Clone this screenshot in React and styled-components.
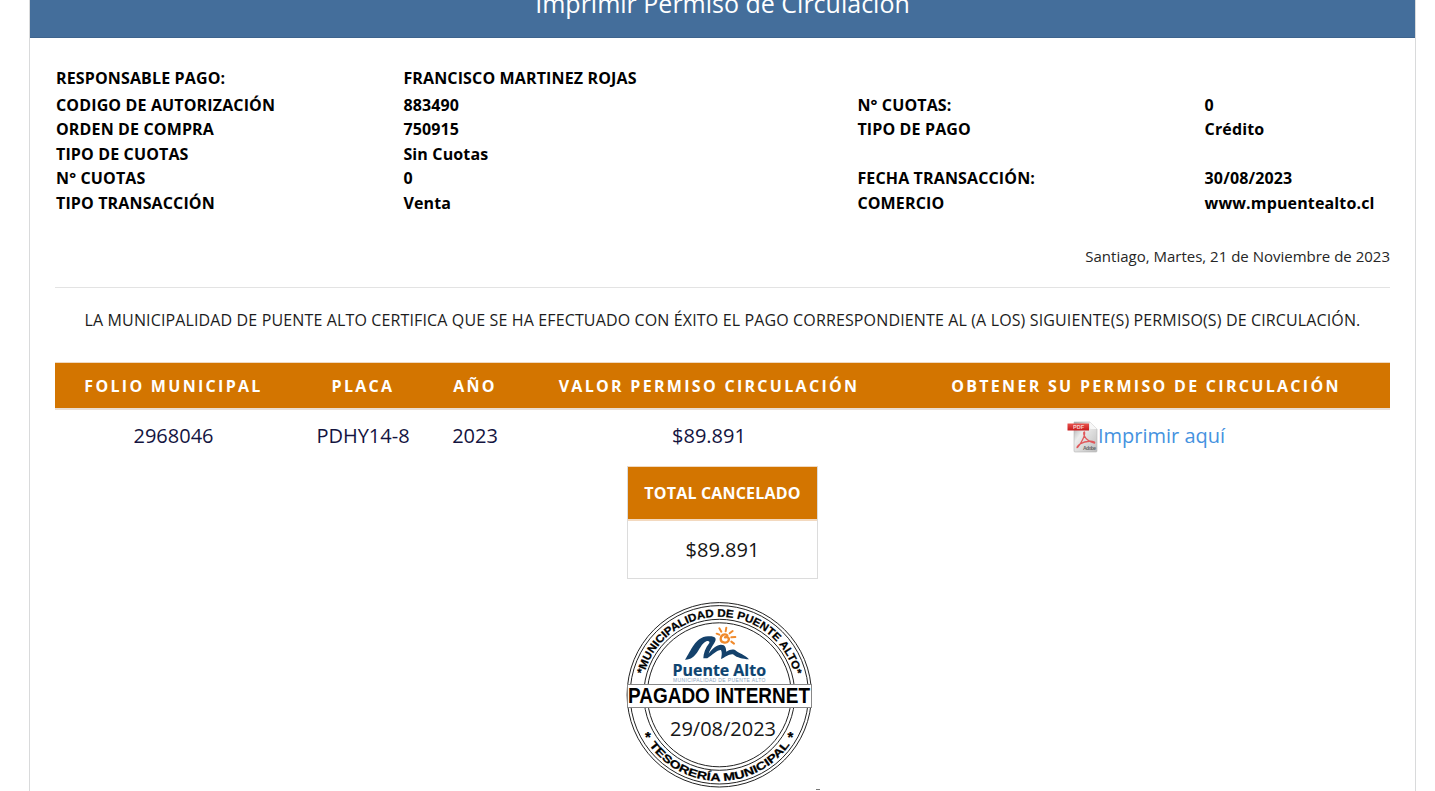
import React from "react";
import styled, { createGlobalStyle } from "styled-components";

const Global = createGlobalStyle`
  html, body { margin: 0; height: 100%; overflow: hidden; background: #fff; }
  body { font-family: "Open Sans", sans-serif; color: #000; }
  * { box-sizing: border-box; }
`;

const Page = styled.div`
  height: 791px;
  overflow: hidden;
  padding: 0 19px 0 29px;
`;

const Panel = styled.main`
  height: 100%;
  border: solid #d9dadb;
  border-width: 0 1px;
`;

const PanelHeader = styled.header`
  height: 38px;
  background: #446e9b;
  border-bottom: 1px solid #3e648d;
  color: #fff;
  display: flex;
  justify-content: center;
  overflow: hidden;
`;

const Title = styled.h1`
  margin: -14px 0 0;
  font-size: 25px;
  line-height: 34px;
  font-weight: 400;
  white-space: nowrap;
`;

const Body = styled.div`
  padding: 25px 25px 0;
`;

const Details = styled.dl`
  margin: 0;
  display: grid;
  grid-template-columns: 347.400px 454px 347.200px 1fr;
  grid-template-rows: 26.700px repeat(5, 24.500px);
  padding: 0 1px;
  width: 1335px;
  font-size: 16px;
  font-weight: 700;
  letter-spacing: 0.140px;
  white-space: nowrap;
`;

const Label = styled.dt`
  padding-top: 3px;
  line-height: 24px;
`;

const Value = styled.dd`
  margin: 0;
  padding-top: 3px;
  line-height: 24px;
`;

const Place = styled.p`
  margin: 32px 0 0;
  height: 44px;
  font-size: 15px;
  line-height: 24px;
  text-align: right;
  color: #262626;
  border-bottom: 1px solid #e3e3e3;
`;

const Statement = styled.p`
  margin: 20px 0 30px;
  height: 24px;
  line-height: 24px;
  font-size: 16px;
  color: #1c1c1c;
  letter-spacing: 0.136px;
  text-align: center;
  white-space: nowrap;
`;

const Table = styled.table`
  width: 1335px;
  table-layout: fixed;
  border-collapse: separate;
  border-spacing: 0;
  text-align: center;
`;

const Head = styled.th`
  height: 48px;
  padding: 1px 0 0;
  background: #d37500;
  color: #fff;
  border-top: 1px solid #f0d9c0;
  border-bottom: 2px solid #eaded2;
  font-size: 16px;
  font-weight: 700;
  letter-spacing: 2.300px;
  white-space: nowrap;
`;

const Cell = styled.td`
  height: 56px;
  padding: 0 0 4px;
  color: #14143f;
  font-size: 20px;
  line-height: 28px;
  vertical-align: middle;
  white-space: nowrap;
`;

const PrintLink = styled.a`
  display: flex;
  align-items: center;
  justify-content: center;
  height: 28px;
  color: #4592e0;
  svg { display: block; margin-top: 2px; }
`;

const Total = styled.section`
  width: 191px;
  height: 113px;
  margin: 0 0 0 572px;
  border: 1px solid #dcdcdc;
  border-top-color: #f0d9c0;
  text-align: center;
`;

const TotalHead = styled.div`
  height: 54px;
  background: #d37500;
  border-bottom: 2px solid #f3d9bf;
  color: #fff;
  font-size: 16px;
  font-weight: 700;
  line-height: 52px;
  letter-spacing: 0.180px;
`;

const TotalValue = styled.div`
  font-size: 20px;
  line-height: 58px;
  color: #161616;
`;

const Stamp = styled.svg`
  display: block;
  margin: 21px 0 0 570px;
`;

const details = [
  ["RESPONSABLE PAGO:", "FRANCISCO MARTINEZ ROJAS", "", ""],
  ["CODIGO DE AUTORIZACIÓN", "883490", "N° CUOTAS:", "0"],
  ["ORDEN DE COMPRA", "750915", "TIPO DE PAGO", "Crédito"],
  ["TIPO DE CUOTAS", "Sin Cuotas", "", ""],
  ["N° CUOTAS", "0", "FECHA TRANSACCIÓN:", "30/08/2023"],
  ["TIPO TRANSACCIÓN", "Venta", "COMERCIO", "www.mpuentealto.cl"],
];

const columns = [
  ["FOLIO MUNICIPAL", 237],
  ["PLACA", 142],
  ["AÑO", 82],
  ["VALOR PERMISO CIRCULACIÓN", 386],
  ["OBTENER SU PERMISO DE CIRCULACIÓN", 488],
];

function PdfIcon() {
  return (
    <svg width="31" height="32" viewBox="0 0 31 32">
      <defs>
        <linearGradient id="sheet" x1="0" y1="0" x2="1" y2="1">
          <stop offset="0" stopColor="#a0a0a0" />
          <stop offset=".35" stopColor="#ececec" />
          <stop offset="1" stopColor="#bdbdbd" />
        </linearGradient>
        <linearGradient id="ribbon" x1="0" y1="0" x2="0" y2="1">
          <stop offset="0" stopColor="#e8544f" />
          <stop offset="1" stopColor="#c81a1c" />
        </linearGradient>
      </defs>
      <path d="M7 1H23L30 8V30Q30 31 29 31H8Q7 31 7 30Z" fill="url(#sheet)" stroke="#b5b5b5" strokeWidth=".6" />
      <path d="M23 1L30 8H24Q23 8 23 7Z" fill="#f7f7f7" />
      <path d="M10.500 26.500C14 23 18.500 14 17.500 11C16 10 15.500 19 27.500 22C29 20.500 20 18.500 13 23C10 25 9.500 27 10.500 26.500Z" fill="none" stroke="#e0585b" strokeWidth="1.300" />
      <path d="M.5 2.500H22V9.500H.5Z" fill="url(#ribbon)" />
      <text x="6" y="8" fontSize="5.500" fontWeight="700" fill="#fff" fontFamily="Liberation Sans" opacity=".75">PDF</text>
      <text x="16" y="29" fontSize="5" fontWeight="700" fill="#666" fontFamily="Liberation Sans" textLength="13">Adobe</text>
    </svg>
  );
}

function PaidStamp() {
  return (
    <Stamp width="196" height="190" viewBox="625 600 196 190">
      <g fill="none" stroke="#222" strokeWidth="1">
        <circle cx="719.300" cy="694.800" r="92.200" />
        <circle cx="719.300" cy="694.800" r="89.200" />
        <circle cx="719.300" cy="694.800" r="75.500" />
        <circle cx="719.300" cy="694.800" r="72" />
      </g>
      <defs>
        <path id="arcTop" d="M641.300 694.800A78 78 0 0 1 797.300 694.800" />
        <path id="arcBottom" d="M633 694.800A86.300 86.300 0 0 0 805.600 694.800" />
      </defs>
      <g fontFamily="Liberation Sans" fontWeight="700" fontSize="11" fill="#000" stroke="#000" strokeWidth=".25">
        <text textLength="204" lengthAdjust="spacingAndGlyphs"><textPath href="#arcTop" startOffset="20.500">*MUNICIPALIDAD DE PUENTE ALTO*</textPath></text>
        <text textLength="164" lengthAdjust="spacingAndGlyphs"><textPath href="#arcBottom" startOffset="53.500">TESORERÍA MUNICIPAL</textPath></text>
        <text x="645" y="742" fontSize="15">*</text>
        <text x="787.500" y="742" fontSize="15">*</text>
      </g>
      <g transform="translate(620 595) scale(.3333)">
        <path d="M195 194C214 168 224 126 264 124C288 123 291 131 283 144C275 157 268 168 266 176C278 160 290 149 303 149C317 149 318 160 319 170C331 163 341 161 349 168C360 177 372 177 387 193C367 191 351 188 341 179C333 173 316 186 303 192C305 182 307 172 303 165C293 164 276 180 262 190H250C250 176 256 158 268 144C270 137 262 135 254 142C235 156 231 195 195 194Z" fill="#14416b" />
        <g fill="none" stroke="#f08a2c" strokeLinecap="round">
          <path d="M322 121C313 114 302 121 302 131C302 143 318 147 325 138C330 129 322 124 315 127" strokeWidth="7" />
          <path d="M290 116L298 119M298 100L304 110M319 98L317 109M338 108L329 115M346 126L334 127M342 146L334 140" strokeWidth="6" />
        </g>
      </g>
      <text x="672.500" y="676" fontFamily="Open Sans" fontWeight="700" fontSize="16" fill="#0d4470" stroke="#0d4470" strokeWidth=".2" textLength="93.500" lengthAdjust="spacingAndGlyphs">Puente Alto</text>
      <text x="673" y="682" fontFamily="Liberation Sans" fontSize="5" fill="#8ea5bd" textLength="92.500" lengthAdjust="spacing">MUNICIPALIDAD DE PUENTE ALTO</text>
      <rect x="627.500" y="684.500" width="184" height="23" fill="#fff" stroke="#888" strokeWidth="1" />
      <text x="628" y="703" fontFamily="Liberation Sans" fontWeight="700" fontSize="21.500" textLength="182" lengthAdjust="spacingAndGlyphs">PAGADO INTERNET</text>
      <text x="670" y="736" fontFamily="Open Sans" fill="#161616" fontSize="20" textLength="106">29/08/2023</text>
      <path d="M816 789.500H820" stroke="#777" />
    </Stamp>
  );
}

export default function App() {
  return (
    <Page>
      <Global />
      <Panel>
        <PanelHeader><Title>Imprimir Permiso de Circulación</Title></PanelHeader>
        <Body>
          <Details>
            {details.flatMap((row, r) =>
              row.map((text, c) =>
                c % 2 ? (
                  <Value key={`${r}-${c}`}>{text}</Value>
                ) : (
                  <Label key={`${r}-${c}`}>{text}</Label>
                )
              )
            )}
          </Details>
          <Place>Santiago, Martes, 21 de Noviembre de 2023</Place>
          <Statement>LA MUNICIPALIDAD DE PUENTE ALTO CERTIFICA QUE SE HA EFECTUADO CON ÉXITO EL PAGO CORRESPONDIENTE AL (A LOS) SIGUIENTE(S) PERMISO(S) DE CIRCULACIÓN.</Statement>
          <Table>
            <colgroup>{columns.map(([name, w]) => <col key={name} width={w} />)}</colgroup>
            <thead><tr>{columns.map(([name]) => <Head key={name}>{name}</Head>)}</tr></thead>
            <tbody>
              <tr>
                <Cell>2968046</Cell>
                <Cell>PDHY14-8</Cell>
                <Cell>2023</Cell>
                <Cell>$89.891</Cell>
                <Cell><PrintLink><PdfIcon />Imprimir aquí</PrintLink></Cell>
              </tr>
            </tbody>
          </Table>
          <Total>
            <TotalHead>TOTAL CANCELADO</TotalHead>
            <TotalValue>$89.891</TotalValue>
          </Total>
          <PaidStamp />
        </Body>
      </Panel>
    </Page>
  );
}
